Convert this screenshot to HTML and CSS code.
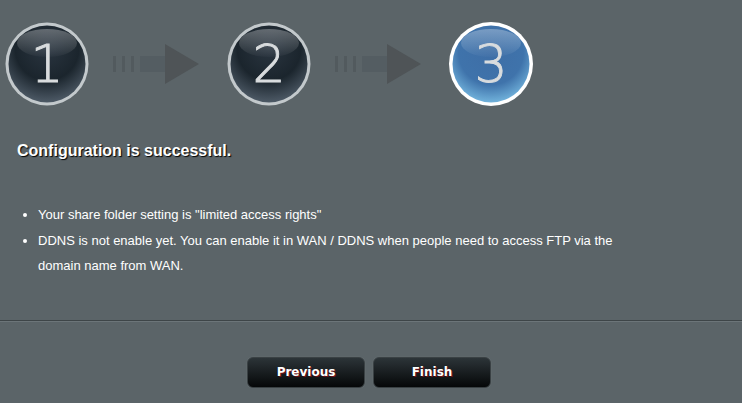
FILE: index.html
```html
<!DOCTYPE html>
<html lang="en">
<head>
    <meta charset="UTF-8">
    <title>FTP Wizard - Step 3</title>
    <link rel="stylesheet" href="styles.css">
</head>
<body>

    <!-- Step indicator -->
    <div class="steps">
        <svg class="step" width="86" height="86" viewBox="0 0 86 86">
            <defs>
                <radialGradient id="dark" cx="50%" cy="30%" r="75%">
                    <stop offset="0" stop-color="#2a3540"/>
                    <stop offset="0.55" stop-color="#1b252d"/>
                    <stop offset="1" stop-color="#566370"/>
                </radialGradient>
                <linearGradient id="gloss" x1="0" y1="0" x2="0" y2="1">
                    <stop offset="0" stop-color="#ffffff" stop-opacity="0.3"/>
                    <stop offset="1" stop-color="#ffffff" stop-opacity="0.02"/>
                </linearGradient>
                <radialGradient id="blue" cx="50%" cy="35%" r="70%">
                    <stop offset="0" stop-color="#3e6ea6"/>
                    <stop offset="0.6" stop-color="#3f73ab"/>
                    <stop offset="1" stop-color="#7cc0e6"/>
                </radialGradient>
            </defs>
            <circle cx="43" cy="43" r="41.5" fill="#c3c9cc"/>
            <circle cx="43" cy="43" r="38.5" fill="url(#dark)"/>
            <ellipse cx="43" cy="22" rx="30" ry="14" fill="url(#gloss)"/>
            <text x="43" y="61" class="num">1</text>
        </svg>
        <svg class="arrow" width="86" height="40" viewBox="0 0 86 40">
            <rect x="0" y="12" width="3" height="16" fill="#525a5e"/>
            <rect x="9" y="12" width="3" height="16" fill="#525a5e"/>
            <rect x="18" y="12" width="3" height="16" fill="#525a5e"/>
            <rect x="27" y="12" width="26" height="16" fill="#545d62"/>
            <polygon points="52,12 52,0 86,20 52,40 52,28" fill="#4f5457"/>
        </svg>
        <svg class="step" width="86" height="86" viewBox="0 0 86 86">
            <circle cx="43" cy="43" r="41.5" fill="#c3c9cc"/>
            <circle cx="43" cy="43" r="38.5" fill="url(#dark)"/>
            <ellipse cx="43" cy="22" rx="30" ry="14" fill="url(#gloss)"/>
            <text x="43" y="61" class="num">2</text>
        </svg>
        <svg class="arrow" width="86" height="40" viewBox="0 0 86 40">
            <rect x="0" y="12" width="3" height="16" fill="#525a5e"/>
            <rect x="9" y="12" width="3" height="16" fill="#525a5e"/>
            <rect x="18" y="12" width="3" height="16" fill="#525a5e"/>
            <rect x="27" y="12" width="26" height="16" fill="#545d62"/>
            <polygon points="52,12 52,0 86,20 52,40 52,28" fill="#4f5457"/>
        </svg>
        <svg class="step" width="86" height="86" viewBox="0 0 86 86">
            <circle cx="43" cy="43" r="42" fill="#ffffff"/>
            <circle cx="43" cy="43" r="38.5" fill="url(#blue)"/>
            <ellipse cx="43" cy="22" rx="30" ry="14" fill="url(#gloss)"/>
            <text x="43" y="61" class="num">3</text>
        </svg>
    </div>

    <!-- Result -->
    <h1 class="result">Configuration is successful.</h1>

    <ul class="notes">
        <li>Your share folder setting is "limited access rights"</li>
        <li>DDNS is not enable yet. You can enable it in WAN / DDNS when people need to access FTP via the domain name from WAN.</li>
    </ul>

    <div class="divider"></div>

    <div class="buttons">
        <button class="btn">Previous</button>
        <button class="btn">Finish</button>
    </div>

</body>
</html>
```

FILE: styles.css
```css
body {
    margin: 0;
    padding: 0;
    background-color: #5b6468;
    font-family: "Liberation Sans", Arial, sans-serif;
    color: #fff;
}
.steps {
    display: flex;
    align-items: center;
    padding: 21px 0 0 4px;
}
.step {
    display: block;
}
.arrow {
    display: block;
    margin: 0 27px 0 23px;
}
.num {
    font-family: "DejaVu Sans", sans-serif;
    font-size: 52px;
    font-weight: 200;
    fill: #d9dcde;
    stroke: #d9dcde;
    stroke-width: 0.9px;
    text-anchor: middle;
}
.result {
    margin: 35px 0 0 17px;
    font-size: 16px;
    font-weight: bold;
    color: #fff;
    text-shadow: 1px 1px 1px #000;
}
.notes {
    margin: 42px 0 0 0;
    padding: 0 0 0 38px;
    width: 600px;
    font-size: 13px;
    line-height: 25.5px;
    color: #fff;
}
.divider {
    margin-top: 41px;
    height: 1px;
    background: #3e4548;
    border-bottom: 1px solid #6c7579;
}
.buttons {
    display: flex;
    justify-content: center;
    gap: 8px;
    padding: 35px 4px 0 0;
}
.btn {
    width: 118px;
    height: 31px;
    border: 1px solid #3a4144;
    border-radius: 6px;
    background: linear-gradient(to bottom, #2c3438, #050708);
    box-shadow: 0 0 1px #7a8286;
    color: #fff;
    font-family: "DejaVu Sans", Verdana, sans-serif;
    font-size: 12px;
    font-weight: bold;
    text-shadow: 1px 1px 0 #6a1018;
    cursor: pointer;
}
```
